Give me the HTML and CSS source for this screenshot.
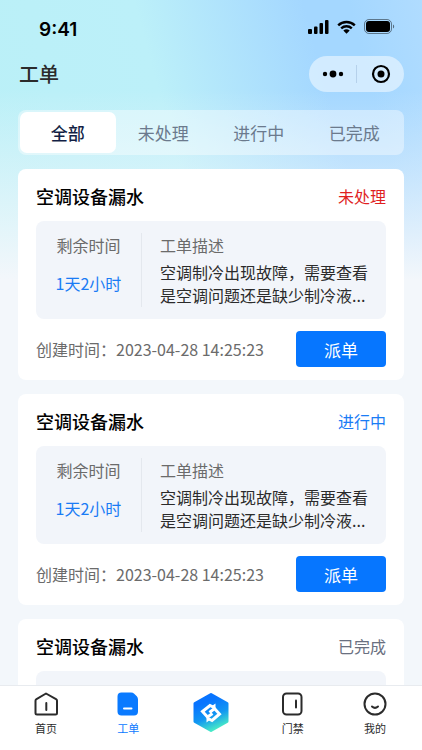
FILE: index.html
```html
<!DOCTYPE html>
<html lang="zh-CN">
<head>
    <meta charset="UTF-8">
    <meta name="viewport" content="width=device-width, initial-scale=1.0">
    <title>工单</title>
    <link rel="stylesheet" href="styles.css">
</head>
<body>
    <div class="app">
        <div class="status-bar">
            <span class="time">9:41</span>
            <div class="status-icons">
                <svg width="21" height="14" viewBox="0 0 21 14">
                    <rect x="0" y="9" width="4" height="5" rx="1"/>
                    <rect x="6" y="6.5" width="3.5" height="7.5" rx="1"/>
                    <rect x="11.5" y="3" width="3.5" height="11" rx="1"/>
                    <rect x="17" y="0" width="3.5" height="14" rx="1"/>
                </svg>
                <svg width="19" height="14" viewBox="0 0 19 14">
                    <path d="M1.2 5.3a12 12 0 0 1 16.6 0M4.2 8.3a7.8 7.8 0 0 1 10.6 0" fill="none" stroke="#000" stroke-width="2.4"/>
                    <path d="M6.3 10.6a4.8 4.8 0 0 1 6.4 0L9.5 13.8z"/>
                </svg>
                <svg width="31" height="15" viewBox="0 0 31 15">
                    <rect x="0.5" y="0.5" width="27" height="14" rx="4.5" fill="none" stroke="#000" stroke-opacity="0.45"/>
                    <rect x="2" y="2" width="24" height="11" rx="3"/>
                    <path d="M29 5.5v4c1.6-0.7 1.6-3.3 0-4z" fill-opacity="0.5"/>
                </svg>
            </div>
        </div>

        <header class="header">
            <h1>工单</h1>
            <div class="capsule">
                <button type="button" aria-label="更多">
                    <svg width="22" height="8" viewBox="0 0 22 8">
                        <circle cx="3" cy="4" r="2.2"/>
                        <circle cx="11" cy="4" r="3.4"/>
                        <circle cx="19" cy="4" r="2.2"/>
                    </svg>
                </button>
                <button type="button" aria-label="关闭">
                    <svg width="20" height="20" viewBox="0 0 20 20">
                        <circle cx="10" cy="10" r="8" fill="none" stroke="#000" stroke-width="2.2"/>
                        <circle cx="10" cy="10" r="3.5"/>
                    </svg>
                </button>
            </div>
        </header>

        <div class="tabs">
            <button type="button" class="tab active">全部</button>
            <button type="button" class="tab">未处理</button>
            <button type="button" class="tab">进行中</button>
            <button type="button" class="tab">已完成</button>
        </div>

        <main class="list">
            <article class="card">
                <div class="card-head">
                    <h2>空调设备漏水</h2>
                    <span class="state pending">未处理</span>
                </div>
                <div class="info">
                    <div class="remain">
                        <span class="label">剩余时间</span>
                        <span class="remain-time">1天2小时</span>
                    </div>
                    <div class="desc">
                        <span class="label">工单描述</span>
                        <p>空调制冷出现故障，需要查看是空调问题还是缺少制冷液...</p>
                    </div>
                </div>
                <div class="card-foot">
                    <span class="created">创建时间：2023-04-28 14:25:23</span>
                    <button type="button" class="assign">派单</button>
                </div>
            </article>

            <article class="card">
                <div class="card-head">
                    <h2>空调设备漏水</h2>
                    <span class="state doing">进行中</span>
                </div>
                <div class="info">
                    <div class="remain">
                        <span class="label">剩余时间</span>
                        <span class="remain-time">1天2小时</span>
                    </div>
                    <div class="desc">
                        <span class="label">工单描述</span>
                        <p>空调制冷出现故障，需要查看是空调问题还是缺少制冷液...</p>
                    </div>
                </div>
                <div class="card-foot">
                    <span class="created">创建时间：2023-04-28 14:25:23</span>
                    <button type="button" class="assign">派单</button>
                </div>
            </article>

            <article class="card">
                <div class="card-head">
                    <h2>空调设备漏水</h2>
                    <span class="state">已完成</span>
                </div>
                <div class="info">
                </div>
            </article>
        </main>

        <nav class="tabbar">
            <a href="#home">
                <svg width="24" height="24" viewBox="0 0 24 24" fill="none" stroke="#2b2b2b" stroke-width="2" stroke-linejoin="round" stroke-linecap="round">
                    <path d="M12 1.5 22 7.2Q23 7.8 23 8.800V21Q23 22.500 21.500 22.500H3Q1.500 22.500 1.500 21V8.800Q1.500 7.800 2.500 7.200z"/>
                    <path d="M12.300 11v7"/>
                </svg>
                首页
            </a>
            <a href="#orders" class="active">
                <svg width="24" height="24" viewBox="0 0 24 24">
                    <path d="M6 0.5H15q2 0 3.200 1.200l2.600 2.600Q22 5.500 22 7.500V19.500a4 4 0 0 1-4 4H5.500a4 4 0 0 1-4-4V4.500a4 4 0 0 1 4-4z" fill="#0a7aff"/>
                    <path d="M8 16.500h7.500" stroke="#fff" stroke-width="2" stroke-linecap="round"/>
                </svg>
                工单
            </a>
            <a href="#service" class="center" aria-label="服务">
                <svg width="36" height="42" viewBox="0 0 36 42">
                    <defs>
                        <linearGradient id="hex" x1="0.35" y1="0.2" x2="0.65" y2="1">
                            <stop offset="0" stop-color="#0874ff"/>
                            <stop offset="0.5" stop-color="#1196f2"/>
                            <stop offset="1" stop-color="#4cf0c4"/>
                        </linearGradient>
                    </defs>
                    <path d="M18 2.5 34 11.5V29.5L18 38.500 2 29.500V11.500z" fill="url(#hex)" stroke="url(#hex)" stroke-width="3" stroke-linejoin="round"/>
                    <g fill="none" stroke="#fff" stroke-width="3">
                        <path d="M21 15.500 17 13.500 9.500 19.500 14.500 25 19.500 21.500"/>
                        <path d="M15 26.500 19 28.500 26.500 22 21.500 16.500 16.500 20.500"/>
                    </g>
                    <path d="M18 14.500 22.500 11.500 22.500 17zM18 27 13.500 30.500 13.500 25z" fill="#fff"/>
                </svg>
            </a>
            <a href="#door">
                <svg width="24" height="24" viewBox="0 0 24 24" fill="none" stroke="#2b2b2b" stroke-width="2" stroke-linecap="round">
                    <rect x="2" y="1.5" width="18.5" height="21" rx="3.5"/>
                    <path d="M15 8.5v7"/>
                </svg>
                门禁
            </a>
            <a href="#mine">
                <svg width="24" height="24" viewBox="0 0 24 24" fill="none" stroke="#2b2b2b" stroke-width="2" stroke-linecap="round">
                    <circle cx="12" cy="12" r="10.5"/>
                    <path d="M9 14.5q3 2.800 6 0"/>
                </svg>
                我的
            </a>
        </nav>
    </div>
</body>
</html>
```
FILE: styles.css
```css
* {
    box-sizing: border-box;
}
body {
    margin: 0;
    font-family: "Noto Sans CJK SC", "Noto Sans", sans-serif;
    font-size: 16px;
    line-height: 24px;
    color: #2b2b2b;
}
h1, h2, p {
    margin: 0;
}
button {
    font-family: inherit;
    padding: 0;
    border: none;
    background: none;
    cursor: pointer;
}
a {
    color: inherit;
    text-decoration: none;
}
svg {
    display: block;
}
.app {
    display: flex;
    flex-direction: column;
    height: 100vh;
    background-color: #f3f7fb;
    background-image:
        linear-gradient(180deg, rgba(243, 247, 251, 0) 90px, rgba(243, 247, 251, 0.4) 170px, #f3f7fb 280px),
        linear-gradient(75deg, #baf0f7 0%, #bcf0f9 42%, #a4d7ff 76%, #a4d7ff 85%, #b0dcff 100%);
    background-size: 100% 280px;
    background-repeat: no-repeat;
}

/* status bar */
.status-bar {
    display: flex;
    justify-content: space-between;
    align-items: flex-start;
    height: 56px;
    padding: 19px 27px 0 39px;
}
.time {
    font-family: Inter, sans-serif;
    font-size: 19px;
    font-weight: 600;
    line-height: 22px;
    color: #000;
}
.status-icons {
    display: flex;
    align-items: center;
    gap: 8px;
}

/* header */
.header {
    display: flex;
    justify-content: space-between;
    align-items: center;
    padding: 0 18px 0 19px;
}
.header h1 {
    font-size: 20px;
    font-weight: 500;
    line-height: 36px;
}
.capsule {
    display: flex;
    align-items: center;
    width: 95px;
    height: 36px;
    border-radius: 18px;
    background: rgba(255, 255, 255, 0.5);
}
.capsule button {
    flex: 1;
    display: flex;
    justify-content: center;
    align-items: center;
    height: 18px;
}
.capsule button + button {
    border-left: 1px solid rgba(120, 150, 190, 0.3);
}

/* filter tabs */
.tabs {
    display: flex;
    margin: 18px 18px 14px;
    padding: 2px;
    border-radius: 8px;
    background: rgba(255, 255, 255, 0.4);
}
.tab {
    flex: 1;
    height: 41px;
    border-radius: 7px;
    font-size: 17px;
    color: #6b7a8d;
}
.tab.active {
    background: #fff;
    font-weight: 500;
    color: #131f45;
}

/* work orders */
.list {
    flex: 1;
    min-height: 0;
    overflow-y: auto;
    scrollbar-width: none;
    padding: 0 18px;
}
.card {
    margin-bottom: 14px;
    padding: 15px 18px 13px;
    border-radius: 8px;
    background: #fff;
}
.card-head {
    display: flex;
    justify-content: space-between;
    align-items: center;
    margin-bottom: 13px;
}
.card-head h2 {
    font-size: 18px;
    font-weight: 500;
    color: #000;
}
.state {
    color: #6a7080;
}
.state.pending {
    color: #e01f1f;
}
.state.doing {
    color: #1a7cf5;
}
.info {
    display: flex;
    min-height: 98px;
    padding: 12px 0;
    border-radius: 8px;
    background: #f2f5fa;
}
.remain {
    display: flex;
    flex-direction: column;
    align-items: center;
    gap: 14px;
    width: 106px;
    border-right: 1px solid #e4e8ee;
}
.label {
    color: #6b6b6b;
}
.remain-time {
    color: #1a7cf5;
}
.desc {
    flex: 1;
    display: flex;
    flex-direction: column;
    gap: 4px;
    padding: 0 12px 0 18px;
}
.desc p {
    line-height: 23px;
}
.card-foot {
    display: flex;
    justify-content: space-between;
    align-items: center;
    margin-top: 12px;
}
.created {
    color: #6b6b6b;
}
.assign {
    width: 90px;
    height: 36px;
    border-radius: 4px;
    background: #0676ff;
    font-size: 17px;
    color: #fff;
}

/* bottom navigation */
.tabbar {
    display: flex;
    height: 65px;
    padding: 6px 6px 0 5px;
    border-top: 1px solid #e8ebef;
    background: #fff;
}
.tabbar a {
    flex: 1;
    display: flex;
    flex-direction: column;
    align-items: center;
    gap: 3px;
    font-size: 11px;
    line-height: 18px;
}
.tabbar a.active {
    color: #0a7aff;
}
```
